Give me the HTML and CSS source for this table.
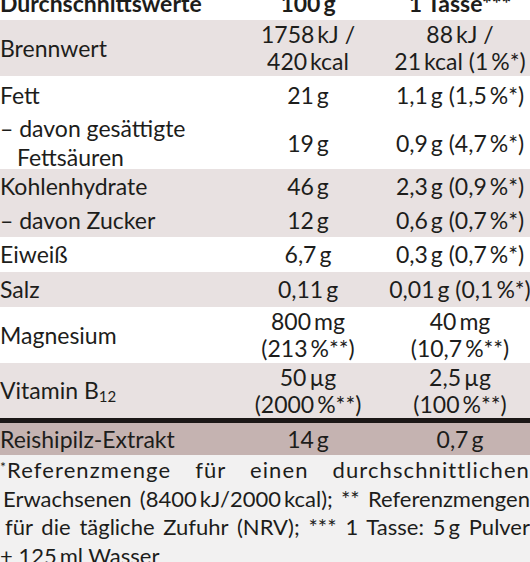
FILE: index.html
```html
<!DOCTYPE html>
<html lang="de">
<head>
<meta charset="utf-8">
<title>Nährwerte</title>
<link rel="stylesheet" href="styles.css">
</head>
<body>
<div class="sheet">
  <div class="row head">
    <div class="label">Durchschnittswerte</div>
    <div class="val">100<i class="ns"></i>g</div>
    <div class="val">1 Tasse***</div>
  </div>
  <div class="row shade h56">
    <div class="label">Brennwert</div>
    <div class="val">1758<i class="ns"></i>kJ /<br>420<i class="ns"></i>kcal</div>
    <div class="val">88<i class="ns"></i>kJ /<br>21<i class="ns"></i>kcal (1<i class="ns"></i>%*)</div>
  </div>
  <div class="row h38">
    <div class="label">Fett</div>
    <div class="val">21<i class="ns"></i>g</div>
    <div class="val">1,1<i class="ns"></i>g (1,5<i class="ns"></i>%*)</div>
  </div>
  <div class="row h55 wide">
    <div class="label">– davon gesättigte<br><span class="ind">Fettsäuren</span></div>
    <div class="val">19<i class="ns"></i>g</div>
    <div class="val">0,9<i class="ns"></i>g (4,7<i class="ns"></i>%*)</div>
  </div>
  <div class="row shade h34">
    <div class="label">Kohlenhydrate</div>
    <div class="val">46<i class="ns"></i>g</div>
    <div class="val">2,3<i class="ns"></i>g (0,9<i class="ns"></i>%*)</div>
  </div>
  <div class="row shade h34">
    <div class="label">– davon Zucker</div>
    <div class="val">12<i class="ns"></i>g</div>
    <div class="val">0,6<i class="ns"></i>g (0,7<i class="ns"></i>%*)</div>
  </div>
  <div class="row h35">
    <div class="label">Eiweiß</div>
    <div class="val">6,7<i class="ns"></i>g</div>
    <div class="val">0,3<i class="ns"></i>g (0,7<i class="ns"></i>%*)</div>
  </div>
  <div class="row shade h35">
    <div class="label">Salz</div>
    <div class="val">0,11<i class="ns"></i>g</div>
    <div class="val">0,01<i class="ns"></i>g (0,1<i class="ns"></i>%*)</div>
  </div>
  <div class="row h56">
    <div class="label">Magnesium</div>
    <div class="val">800<i class="ns"></i>mg<br>(213<i class="ns"></i>%**)</div>
    <div class="val">40<i class="ns"></i>mg<br>(10,7<i class="ns"></i>%**)</div>
  </div>
  <div class="row shade h55">
    <div class="label">Vitamin B<sub>12</sub></div>
    <div class="val">50<i class="ns"></i>µg<br>(2000<i class="ns"></i>%**)</div>
    <div class="val">2,5<i class="ns"></i>µg<br>(100<i class="ns"></i>%**)</div>
  </div>
  <div class="row extra">
    <div class="label">Reishipilz-Extrakt</div>
    <div class="val">14<i class="ns"></i>g</div>
    <div class="val">0,7<i class="ns"></i>g</div>
  </div>
  <div class="notes">
    <span class="line l1"><sup>*</sup>Referenzmenge für einen durchschnittlichen</span>
    <span class="line l2">Erwachsenen (8400<i class="ns"></i>kJ/2000<i class="ns"></i>kcal); ** Referenzmengen</span>
    <span class="line l3">für die tägliche Zufuhr (NRV); *** 1 Tasse: 5<i class="ns"></i>g Pulver</span>
    <span class="line l4">+ 125<i class="ns"></i>ml Wasser</span>
  </div>
</div>
</body>
</html>
```
FILE: styles.css
```css
html, body {
  margin: 0;
  padding: 0;
  background: #ffffff;
}
body {
  width: 530px;
  height: 562px;
  overflow: hidden;
  font-family: Lato, "Open Sans", sans-serif;
  font-size: 23px;
  color: #1d1d1b;
}
.sheet {
  width: 538px;
  margin-top: -14px;
}
.ns {
  display: inline-block;
  width: 3px;
}
.row {
  display: grid;
  grid-template-columns: 234px 148px 156px;
  align-items: center;
  line-height: 27px;
}
.head {
  height: 34px;
  font-weight: 700;
}
.label {
  text-align: left;
  white-space: nowrap;
}
.val {
  text-align: center;
  white-space: nowrap;
}
.ind {
  padding-left: 17px;
}
.shade {
  background: #e8e1e1;
}
.h34 { height: 34px; }
.h35 { height: 35px; }
.h38 { height: 38px; }
.h55 { height: 55px; }
.h56 { height: 56px; }
.wide { line-height: 29px; }
sub {
  font-size: 15px;
  vertical-align: -3px;
  line-height: 0;
}
.extra {
  height: 32px;
  background: #c5b3b1;
  border-top: 5px solid #1b1716;
}
.notes {
  width: 530px;
  background: #f2f1f1;
  font-size: 22px;
  line-height: 28.5px;
  padding-top: 1px;
  height: 120px;
}
.line {
  display: block;
  text-align: justify;
  text-align-last: justify;
  white-space: nowrap;
}
.l1 { letter-spacing: 1.1px; }
.l2 { padding-left: 3px; }
.l3 { padding-left: 5px; }
.l4 { text-align-last: left; }
sup {
  font-size: 14px;
  vertical-align: 6px;
  line-height: 0;
}
```
